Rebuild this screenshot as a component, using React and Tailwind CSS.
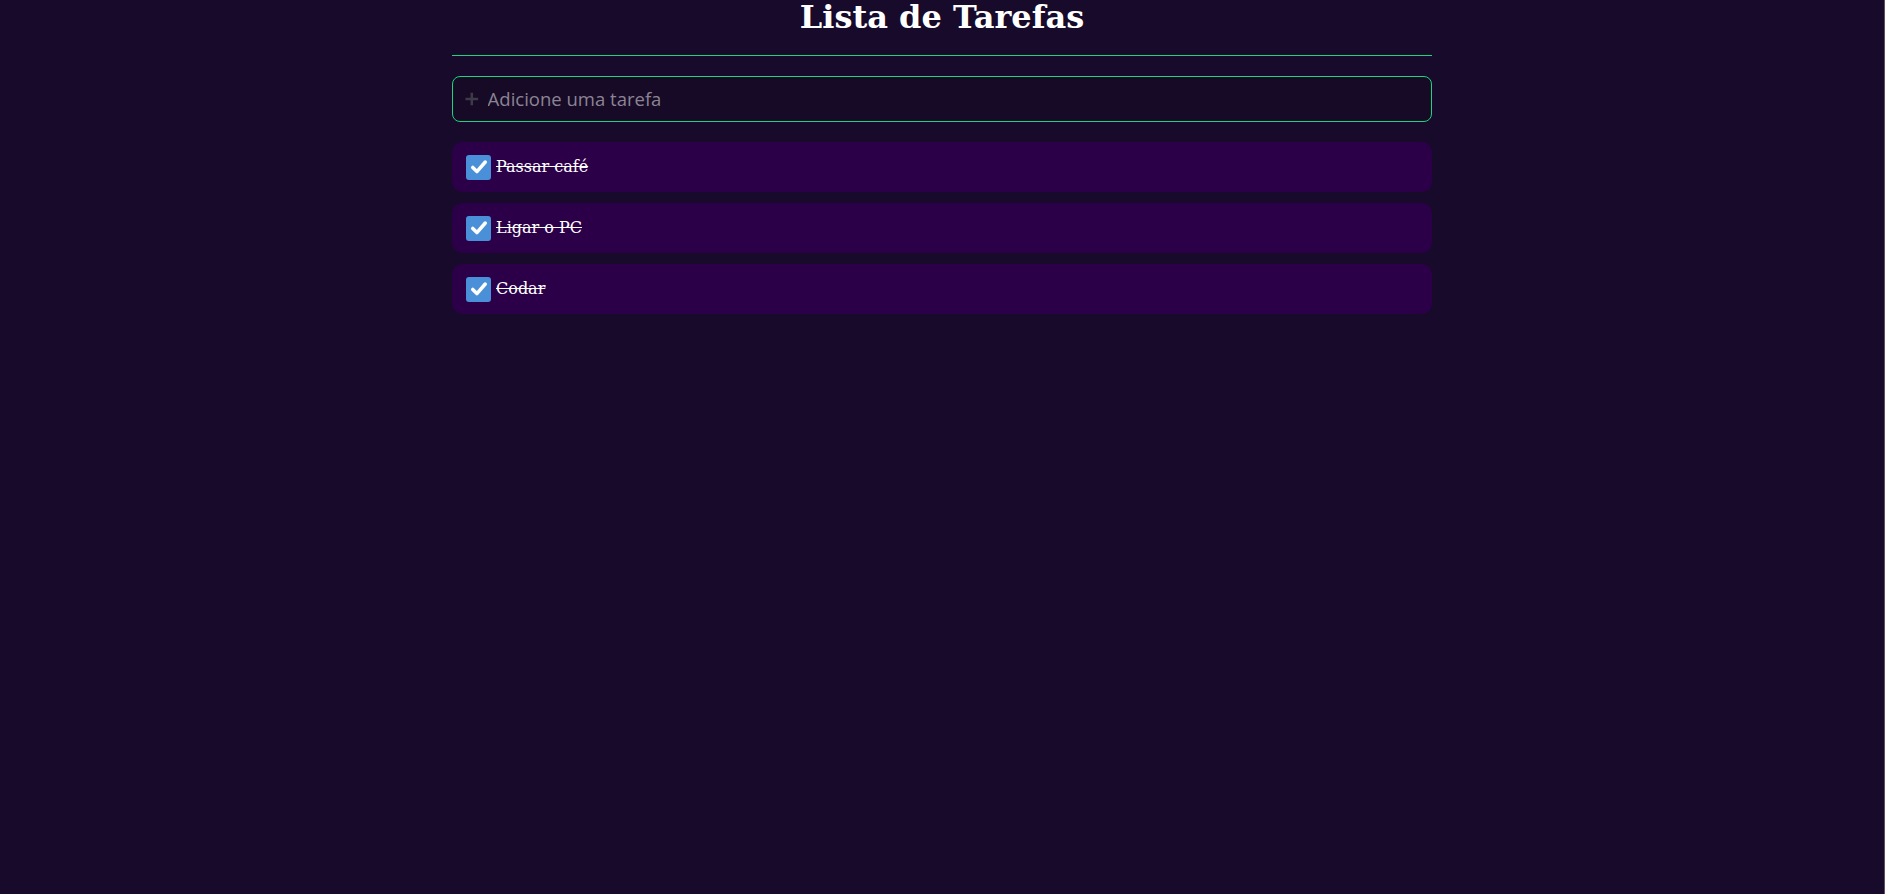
const tasks = ["Passar café", "Ligar o PC", "Codar"];

function CheckBox() {
  return (
    <span className="grid h-[25px] w-[25px] shrink-0 place-items-center rounded-[3px] bg-[#4a90d9]">
      <svg viewBox="0 0 24 24" className="h-[20px] w-[20px]" fill="none">
        <path d="M4.5 12.5l5 5L19.5 6" stroke="white" strokeWidth="4.2" strokeLinecap="round" strokeLinejoin="round" />
      </svg>
    </span>
  );
}

function TaskRow({ text }) {
  return (
    <li className="flex h-[50px] items-center gap-[5px] rounded-[10px] bg-[#2b0049] pl-[14px]">
      <CheckBox />
      <span className="font-['DejaVu_Serif',serif] text-base text-white line-through">{text}</span>
    </li>
  );
}

export default function App() {
  return (
    <div className="min-h-screen border-r border-[#5c5466] bg-[#180a2a]">
      <main className="mx-auto w-[980px]">
        <h1 className="h-[55px] pt-px text-center font-['DejaVu_Serif',serif] text-[32px] leading-[33px] font-bold text-white">
          Lista de Tarefas
        </h1>
        <div className="h-px bg-[#1ed47c]" />
        <label className="mt-5 flex h-[46px] items-center gap-[8px] rounded-lg border border-[#1ed47c] bg-[#160a26] px-[11px]">
          <svg viewBox="0 0 16 16" className="h-[16px] w-[16px]" fill="none">
            <path d="M8 1.5v13M1.5 8h13" stroke="#3f3a48" strokeWidth="2.6" />
          </svg>
          <input
            className="w-full bg-transparent font-['Open_Sans',sans-serif] text-[18.5px] text-white outline-none placeholder:text-[#8c8494]"
            placeholder="Adicione uma tarefa"
          />
        </label>
        <ul className="mt-5 flex flex-col gap-[11px]">
          {tasks.map((t) => (
            <TaskRow key={t} text={t} />
          ))}
        </ul>
      </main>
    </div>
  );
}
